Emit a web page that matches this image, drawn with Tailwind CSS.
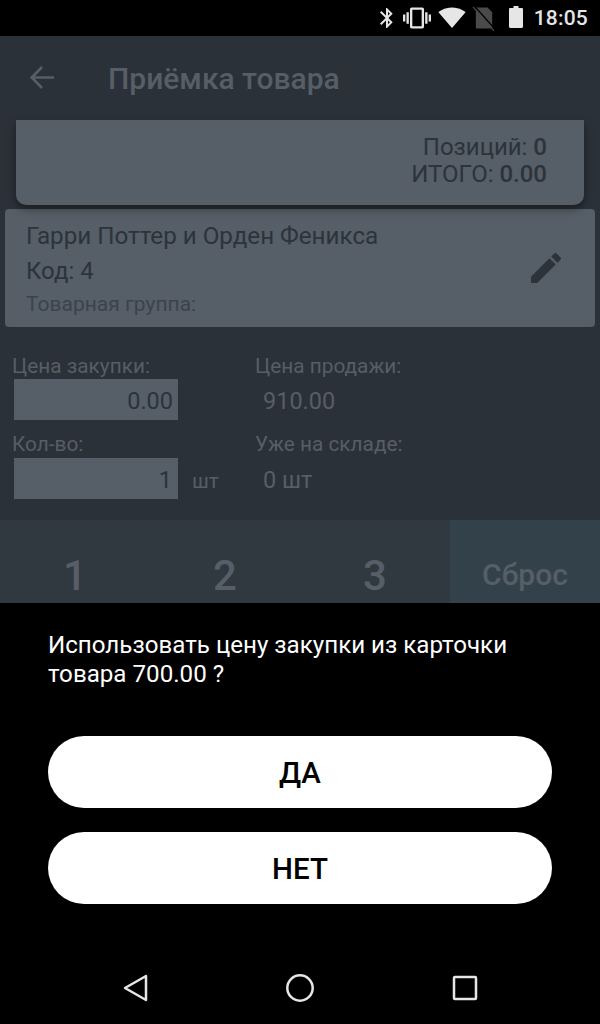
<!DOCTYPE html>
<html lang="ru">
<head>
    <meta charset="UTF-8">
    <meta name="viewport" content="width=device-width, initial-scale=1.0">
    <title>Приёмка товара</title>
    <script src="https://cdn.jsdelivr.net/npm/@tailwindcss/browser@4"></script>
</head>
<body class="bg-black font-['Roboto',sans-serif] w-[600px] h-[1024px] overflow-hidden flex flex-col">
    <!-- status bar -->
    <div class="h-9 shrink-0 bg-black flex items-center justify-end text-[#e6e6e6]">
        <svg class="w-6 h-6" viewBox="0 0 24 24" fill="#e6e6e6"><path d="M17.7 7.700 12 2h-1v7.600L6.400 5 5 6.400 10.600 12 5 17.600 6.400 19l4.600-4.600V22h1l5.700-5.700-4.300-4.300 4.300-4.300zM13 5.800l1.900 1.900L13 9.600V5.800zm1.900 10.500L13 18.200v-3.800l1.900 1.900z"/></svg>
        <svg class="w-[28px] h-[28px] ml-[4px]" viewBox="0 0 24 24" fill="#e6e6e6"><path d="M0 15h2V9H0v6zm3 2h2V7H3v10zm19-8v6h2V9h-2zm-3 8h2V7h-2v10zM16.500 3h-9C6.670 3 6 3.670 6 4.500v15c0 .83.670 1.500 1.500 1.500h9c.83 0 1.500-.67 1.500-1.500v-15c0-.83-.67-1.500-1.500-1.500zM16 19H8V5h8v14z"/></svg>
        <svg class="w-[28px] h-[28px] ml-[7px]" viewBox="0 0 24 24" fill="#e6e6e6"><path d="M12 20.500 23.600 7C23.100 6.600 18.800 3 12 3S.9 6.600.4 7z"/></svg>
        <svg class="w-[28px] h-[28px] ml-[4px]" viewBox="0 0 24 24"><path fill="#4a4a4a" d="M5 3h10l4 4v14H5z"/><path stroke="#000" stroke-width="1" d="M3.500 1.500 21 21"/><path stroke="#4a4a4a" stroke-width="1" d="M2.500 2.500 20.500 23"/></svg>
        <svg class="w-4 h-6 ml-[10px]" viewBox="0 0 16 24" fill="#e6e6e6"><path d="M5.500 0h5v2h3.300c.7 0 1.200.5 1.200 1.200v17.600c0 .7-.5 1.200-1.200 1.200H2.200c-.7 0-1.200-.5-1.200-1.200V3.200C1 2.500 1.500 2 2.200 2h3.300z"/></svg>
        <span class="ml-[10px] mr-[12px] text-[21px] leading-none font-medium tracking-[0.2px]">18:05</span>
    </div>

    <!-- dimmed screen -->
    <div class="h-[567px] shrink-0 bg-[#2b3139] flex flex-col overflow-hidden">
        <div class="h-[84px] shrink-0 flex items-center pl-[28px]">
            <svg class="w-[28px] h-[28px]" viewBox="0 0 28 28" fill="none" stroke="#565e67" stroke-width="2.600"><path d="M26 13.500H4M14 3 3.700 13.500 14 24"/></svg>
            <span class="ml-[52px] text-[30px] leading-none font-medium text-[#565e67] mt-[1px]">Приёмка товара</span>
        </div>

        <div class="relative z-10 h-[85px] mx-[16px] shrink-0 bg-[#565e67] rounded-b-[10px] shadow-[0_4px_8px_rgba(0,0,0,0.4)] flex flex-col items-end pt-[14px] pr-[37px] text-[#2c333b] text-[24px] leading-[27px]">
            <span>Позиций: <span class="font-medium">0</span></span>
            <span>ИТОГО: <span class="font-medium">0.00</span></span>
        </div>

        <div class="h-[118px] mx-[5px] mt-[4px] shrink-0 bg-[#565e67] rounded-[4px] flex items-center justify-between pl-[21px] pr-[30px]">
            <div class="flex flex-col pt-[2px]">
                <span class="text-[24.200px] leading-[28px] text-[#2c333b]">Гарри Поттер и Орден Феникса</span>
                <span class="text-[24px] leading-[28px] text-[#2c333b] mt-[7px]">Код: 4</span>
                <span class="text-[21px] leading-[24px] text-[#3c434b] mt-[7px]">Товарная группа:</span>
            </div>
            <svg class="w-[40px] h-[40px] -mr-[1px]" viewBox="0 0 24 24" fill="#2c333b"><path d="M3 17.250V21h3.750L17.810 9.940l-3.750-3.750L3 17.250zM20.710 7.040a1 1 0 0 0 0-1.410l-2.340-2.340a1 1 0 0 0-1.410 0l-1.830 1.830 3.750 3.750 1.830-1.830z"/></svg>
        </div>

        <div class="flex pt-[28px] h-[193px] shrink-0">
            <div class="w-[255px] pl-[12px] flex flex-col">
                <span class="text-[20.800px] leading-[22px] text-[#565e67]">Цена закупки:</span>
                <div class="ml-[2px] mt-[2px] w-[164px] h-[41px] bg-[#565e67] flex items-center justify-end pr-[5px] pt-[4px] text-[23.500px] text-[#2c333b]">0.00</div>
                <span class="mt-[13px] text-[20.800px] leading-[22px] text-[#565e67]">Кол-во:</span>
                <div class="flex items-end mt-[3px]">
                    <div class="ml-[2px] w-[164px] h-[41px] bg-[#565e67] flex items-center justify-end pr-[6px] pt-[4px] text-[23.500px] text-[#2c333b]">1</div>
                    <span class="ml-[14px] mb-[7px] text-[20.800px] leading-[22px] text-[#565e67]">шт</span>
                </div>
            </div>
            <div class="flex flex-col">
                <span class="text-[20.800px] leading-[22px] text-[#565e67]">Цена продажи:</span>
                <div class="mt-[2px] h-[41px] pl-[8px] pt-[4px] flex items-center text-[23.500px] text-[#565e67]">910.00</div>
                <span class="mt-[13px] text-[20.800px] leading-[22px] text-[#565e67]">Уже на складе:</span>
                <div class="mt-[3px] h-[41px] pl-[8px] pt-[5px] flex items-center text-[23.500px] text-[#565e67]">0 шт</div>
            </div>
        </div>

        <div class="h-[83px] shrink-0 grid grid-cols-4 bg-[#313940] text-[#565e67] font-medium">
            <div class="flex justify-center pt-[31px] text-[42px] leading-[50px]">1</div>
            <div class="flex justify-center pt-[31px] text-[42px] leading-[50px]">2</div>
            <div class="flex justify-center pt-[31px] text-[42px] leading-[50px]">3</div>
            <div class="flex justify-center pt-[38px] text-[30px] leading-[34px] bg-[#33424a]">Сброс</div>
        </div>
    </div>

    <!-- dialog -->
    <div class="flex-1 flex flex-col px-[48px] bg-black">
        <p class="mt-[28px] text-[24.150px] leading-[29px] text-white">Использовать цену закупки из карточки<br>товара 700.00 ?</p>
        <button class="mt-[47px] h-[72px] pt-[2px] rounded-full bg-white text-black text-[29.500px] font-medium">ДА</button>
        <button class="mt-[24px] h-[72px] pt-[2px] rounded-full bg-white text-black text-[29.500px] font-medium">НЕТ</button>
        <div class="mt-auto h-[72px] -mx-[48px] flex items-center justify-between pl-[122px] pr-[122px]">
            <svg class="w-[26px] h-[30px]" viewBox="0 0 26 30" fill="none" stroke="#e6e6e6" stroke-width="2.500" stroke-linejoin="round"><path d="M24 3 3 15l21 12z"/></svg>
            <svg class="w-[30px] h-[30px]" viewBox="0 0 30 30" fill="none" stroke="#e6e6e6" stroke-width="2.500"><circle cx="15" cy="15" r="12.700"/></svg>
            <svg class="w-[26px] h-[26px]" viewBox="0 0 26 26" fill="none" stroke="#e6e6e6" stroke-width="2.500" stroke-linejoin="round"><rect x="2" y="2" width="22" height="22" rx="1"/></svg>
        </div>
    </div>
</body>
</html>
